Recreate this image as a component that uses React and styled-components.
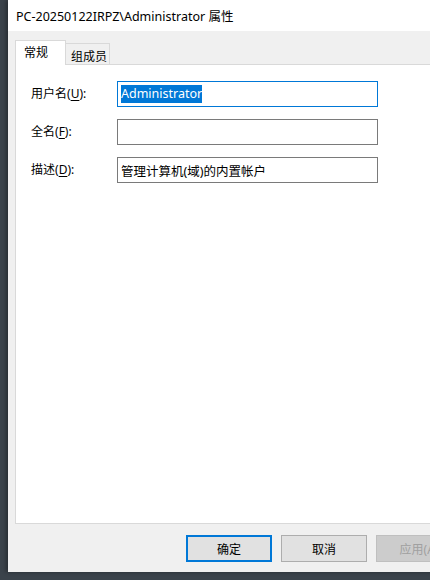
import React from "react";
import styled, { createGlobalStyle } from "styled-components";

const fields = [
  { label: "用户名", key: "U", value: "Administrator", focused: true },
  { label: "全名", key: "F", value: "" },
  { label: "描述", key: "D", value: "管理计算机(域)的内置帐户" },
];

export default function App() {
  return (
    <>
      <GlobalStyle />
      <Desktop>
        <Window>
          <TitleBar>PC-20250122IRPZ\Administrator 属性</TitleBar>
          <Body>
            <Tabs>
              <Tab active>常规</Tab>
              <Tab>组成员</Tab>
            </Tabs>
            <Panel>
              {fields.map((f) => (
                <Row key={f.key}>
                  <Label>
                    {f.label}(<u>{f.key}</u>):
                  </Label>
                  <Input focused={f.focused}>
                    {f.focused ? <Selected>{f.value}</Selected> : f.value}
                  </Input>
                </Row>
              ))}
            </Panel>
            <Buttons>
              <Button primary>确定</Button>
              <Button>取消</Button>
              <Button disabled>应用(A)</Button>
            </Buttons>
          </Body>
        </Window>
      </Desktop>
    </>
  );
}

const GlobalStyle = createGlobalStyle`
  html, body {
    margin: 0;
    padding: 0;
    background: #3b434b;
    overflow: hidden;
  }
`;

const Desktop = styled.div`
  width: 430px;
  height: 580px;
  overflow: hidden;
  background: #3b434b;
  font-family: "Noto Sans", "Noto Sans CJK SC", sans-serif;
  color: #000;
`;

const Window = styled.div`
  margin-left: 8px;
  width: 440px;
  height: 572px;
  background: #f0f0f0;
  display: flex;
  flex-direction: column;
  box-shadow: -2px 0 4px rgba(0, 0, 0, 0.35);
`;

const TitleBar = styled.div`
  height: 31px;
  background: #fff;
  display: flex;
  align-items: center;
  padding-left: 8px;
  font-size: 12.5px;
  color: #000;
`;

const Body = styled.div`
  display: flex;
  flex-direction: column;
  padding: 9px 0 0 7px;
`;

const Tabs = styled.div`
  display: flex;
  align-items: flex-end;
  position: relative;
  z-index: 1;
  margin-bottom: -1px;
`;

const Tab = styled.div`
  box-sizing: border-box;
  height: ${(p) => (p.active ? "25px" : "22px")};
  width: ${(p) => (p.active ? "51px" : "44px")};
  background: ${(p) => (p.active ? "#fff" : "#f0f0f0")};
  border: 1px solid #d9d9d9;
  border-bottom: ${(p) => (p.active ? "none" : "1px solid #d9d9d9")};
  border-left: ${(p) => (p.active ? "1px solid #d9d9d9" : "none")};
  font-size: 12px;
  padding: ${(p) => (p.active ? "2px 0 0 8px" : "3px 0 0 5px")};
`;

const Panel = styled.div`
  box-sizing: border-box;
  height: 460px;
  width: 440px;
  background: #fff;
  border: 1px solid #d9d9d9;
  border-right: none;
  padding: 16px 0 0 15px;
  display: flex;
  flex-direction: column;
  gap: 12px;
`;

const Row = styled.div`
  display: flex;
  align-items: center;
`;

const Label = styled.div`
  width: 86px;
  font-size: 12px;
  color: #000;
  margin-top: -2px;

  u {
    text-decoration-thickness: 1px;
    text-underline-offset: 2px;
  }
`;

const Input = styled.div`
  box-sizing: border-box;
  width: 261px;
  height: 26px;
  border: 1px solid ${(p) => (p.focused ? "#0078d7" : "#7a7a7a")};
  display: flex;
  align-items: center;
  padding-left: 3px;
  font-size: 12.5px;
`;

const Selected = styled.span`
  background: #0078d7;
  color: #fff;
  line-height: 18px;
`;

const Buttons = styled.div`
  display: flex;
  gap: 9px;
  padding: 11px 0 0 171px;
`;

const Button = styled.div`
  box-sizing: border-box;
  flex: none;
  width: 86px;
  height: 27px;
  display: flex;
  align-items: center;
  justify-content: center;
  font-size: 12px;
  background: ${(p) => (p.disabled ? "#cccccc" : "#e1e1e1")};
  color: ${(p) => (p.disabled ? "#a0a0a0" : "#000")};
  border: ${(p) =>
    p.primary ? "2px solid #0078d7" : p.disabled ? "1px solid #bfbfbf" : "1px solid #adadad"};
`;
